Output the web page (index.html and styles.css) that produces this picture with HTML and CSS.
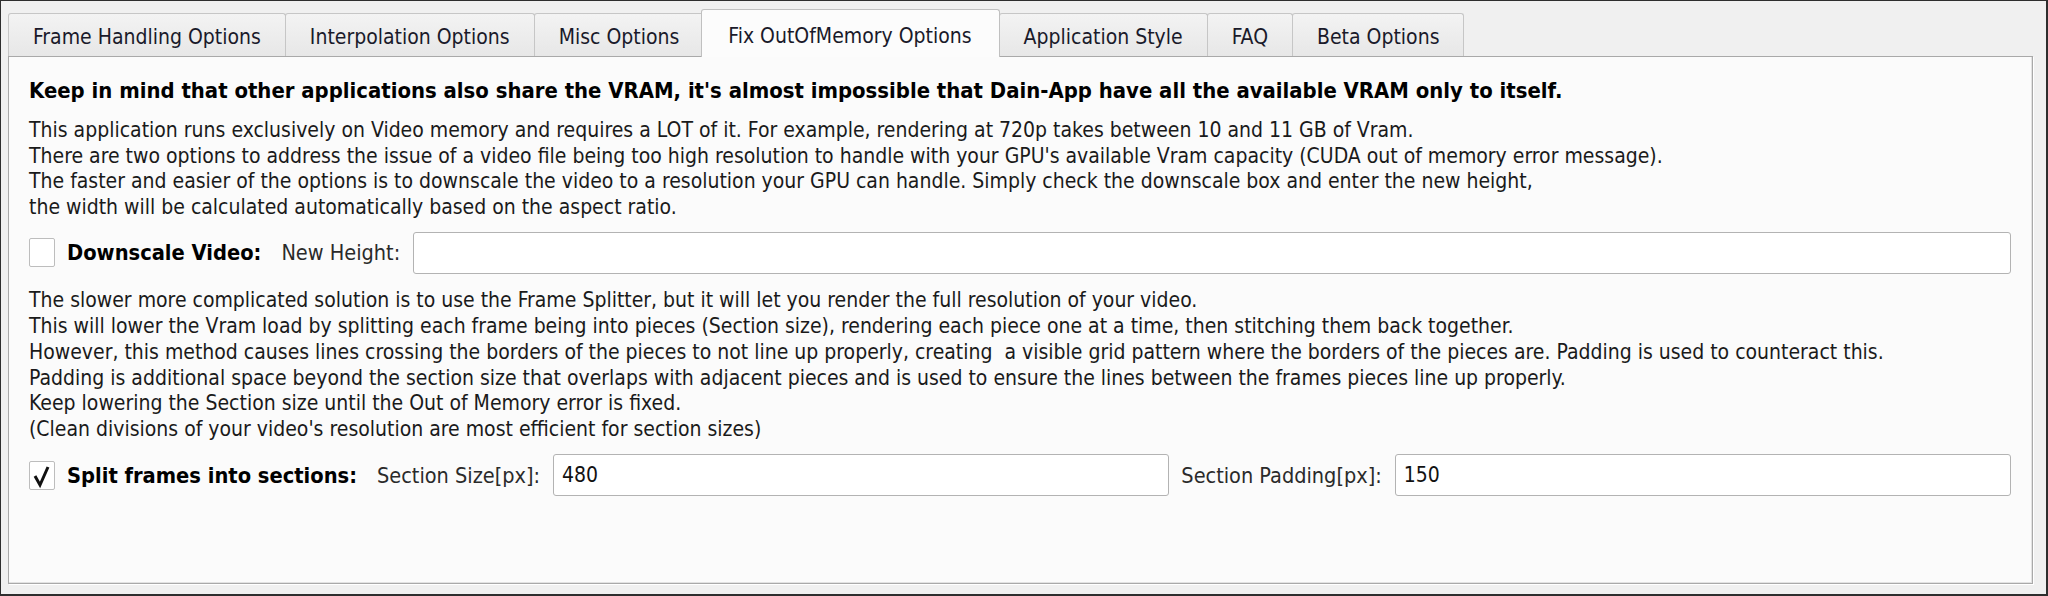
FILE: index.html
```html
<!DOCTYPE html>
<html>
<head>
<meta charset="utf-8">
<link rel="stylesheet" href="styles.css">
</head>
<body>
<div class="window">
  <div class="tabbar">
    <div class="tab">Frame Handling Options</div>
    <div class="tab">Interpolation Options</div>
    <div class="tab">Misc Options</div>
    <div class="tab active">Fix OutOfMemory Options</div>
    <div class="tab">Application Style</div>
    <div class="tab">FAQ</div>
    <div class="tab">Beta Options</div>
  </div>
  <div class="pane">
    <p class="title">Keep in mind that other applications also share the VRAM, it's almost impossible that Dain-App have all the available VRAM only to itself.</p>
    <p class="para">This application runs exclusively on Video memory and requires a LOT of it. For example, rendering at 720p takes between 10 and 11 GB of Vram.<br>There are two options to address the issue of a video file being too high resolution to handle with your GPU's available Vram capacity (CUDA out of memory error message).<br>The faster and easier of the options is to downscale the video to a resolution your GPU can handle. Simply check the downscale box and enter the new height,<br>the width will be calculated automatically based on the aspect ratio.</p>
    <div class="row row-down">
      <span class="check"></span>
      <span class="blabel">Downscale Video:</span>
      <span class="label label-first">New Height:</span>
      <span class="input"></span>
    </div>
    <p class="para para2">The slower more complicated solution is to use the Frame Splitter, but it will let you render the full resolution of your video.<br>This will lower the Vram load by splitting each frame being into pieces (Section size), rendering each piece one at a time, then stitching them back together.<br>However, this method causes lines crossing the borders of the pieces to not line up properly, creating&nbsp; a visible grid pattern where the borders of the pieces are. Padding is used to counteract this.<br>Padding is additional space beyond the section size that overlaps with adjacent pieces and is used to ensure the lines between the frames pieces line up properly.<br>Keep lowering the Section size until the Out of Memory error is fixed.<br>(Clean divisions of your video's resolution are most efficient for section sizes)</p>
    <div class="row row-split">
      <span class="check checked"><svg width="24" height="27" viewBox="0 0 24 27"><path d="M5 14 L10 23 L18 5" fill="none" stroke="#111" stroke-width="3" stroke-linejoin="miter"/></svg></span>
      <span class="blabel">Split frames into sections:</span>
      <span class="label label-first">Section Size[px]:</span>
      <span class="input">480</span>
      <span class="label">Section Padding[px]:</span>
      <span class="input">150</span>
    </div>
  </div>
</div>
</body>
</html>
```
FILE: styles.css
```css
html, body {
  margin: 0;
  padding: 0;
  background: #f0f0f0;
}
.window {
  width: 2048px;
  height: 596px;
  box-sizing: border-box;
  border: 2px solid #2e2e2e;
  border-top-width: 1px;
  border-left-width: 1px;
  background: #f0f0f0;
  padding: 8px 13px 0 7px;
  font-family: "DejaVu Sans Condensed", "DejaVu Sans", sans-serif;
  font-stretch: condensed;
  font-size: 21px;
  color: #111;
}
.tabbar {
  display: flex;
  align-items: flex-end;
  height: 47px;
  padding-left: 0;
  position: relative;
  z-index: 1;
}
.tab {
  box-sizing: border-box;
  height: 43px;
  padding: 11px 24px 0 24px;
  border: 1px solid #c6c6c6;
  border-bottom: none;
  border-radius: 3px 3px 0 0;
  margin-right: -1px;
  background: linear-gradient(#f3f3f3, #e7e7e7);
  color: #1a1a2a;
  white-space: nowrap;
  line-height: 24px;
}
.tab.active {
  height: 48px;
  padding: 14px 27px 0 26px;
  margin: 0 -1px -1px -2px;
  background: #fcfcfc;
  border-color: #c0c0c0;
  position: relative;
  z-index: 2;
}
.pane {
  box-sizing: border-box;
  height: 528px;
  border: 1px solid #a9a9a9;
  box-shadow: inset -1px -1px 0 #e2e2e2, 1px 1px 0 #ffffff;
  background: #fbfbfb;
  padding: 21px 21px 0 20px;
}
.title {
  margin: 0;
  font-weight: bold;
  font-size: 21.9px;
  line-height: 26px;
  color: #000;
  white-space: nowrap;
}
.para {
  margin: 14px 0 0 0;
  line-height: 25.7px;
  color: #1a1a1a;
  white-space: nowrap;
}
.para2 {
  margin-top: 14px;
  line-height: 25.9px;
}
.row {
  display: flex;
  align-items: center;
  height: 42px;
  margin-top: 11px;
}
.row-split {
  margin-top: 11px;
}
.check {
  box-sizing: border-box;
  width: 26px;
  height: 29px;
  border: 1px solid #bdbdbd;
  border-radius: 2px;
  background: #ffffff;
  display: flex;
  align-items: center;
  justify-content: center;
  flex: none;
}
.blabel {
  font-weight: bold;
  font-size: 21.7px;
  margin-left: 12px;
  color: #000;
  white-space: nowrap;
}
.label {
  margin-left: 12px;
  color: #2a2a2a;
  white-space: nowrap;
  font-size: 21.5px;
}
.label-first {
  margin-left: 20px;
}
.input {
  box-sizing: border-box;
  flex: 1;
  height: 42px;
  margin-left: 13px;
  border: 1px solid #b3b3b3;
  border-radius: 3px;
  background: #ffffff;
  padding: 0 8px;
  display: flex;
  align-items: center;
  color: #111;
}
```
